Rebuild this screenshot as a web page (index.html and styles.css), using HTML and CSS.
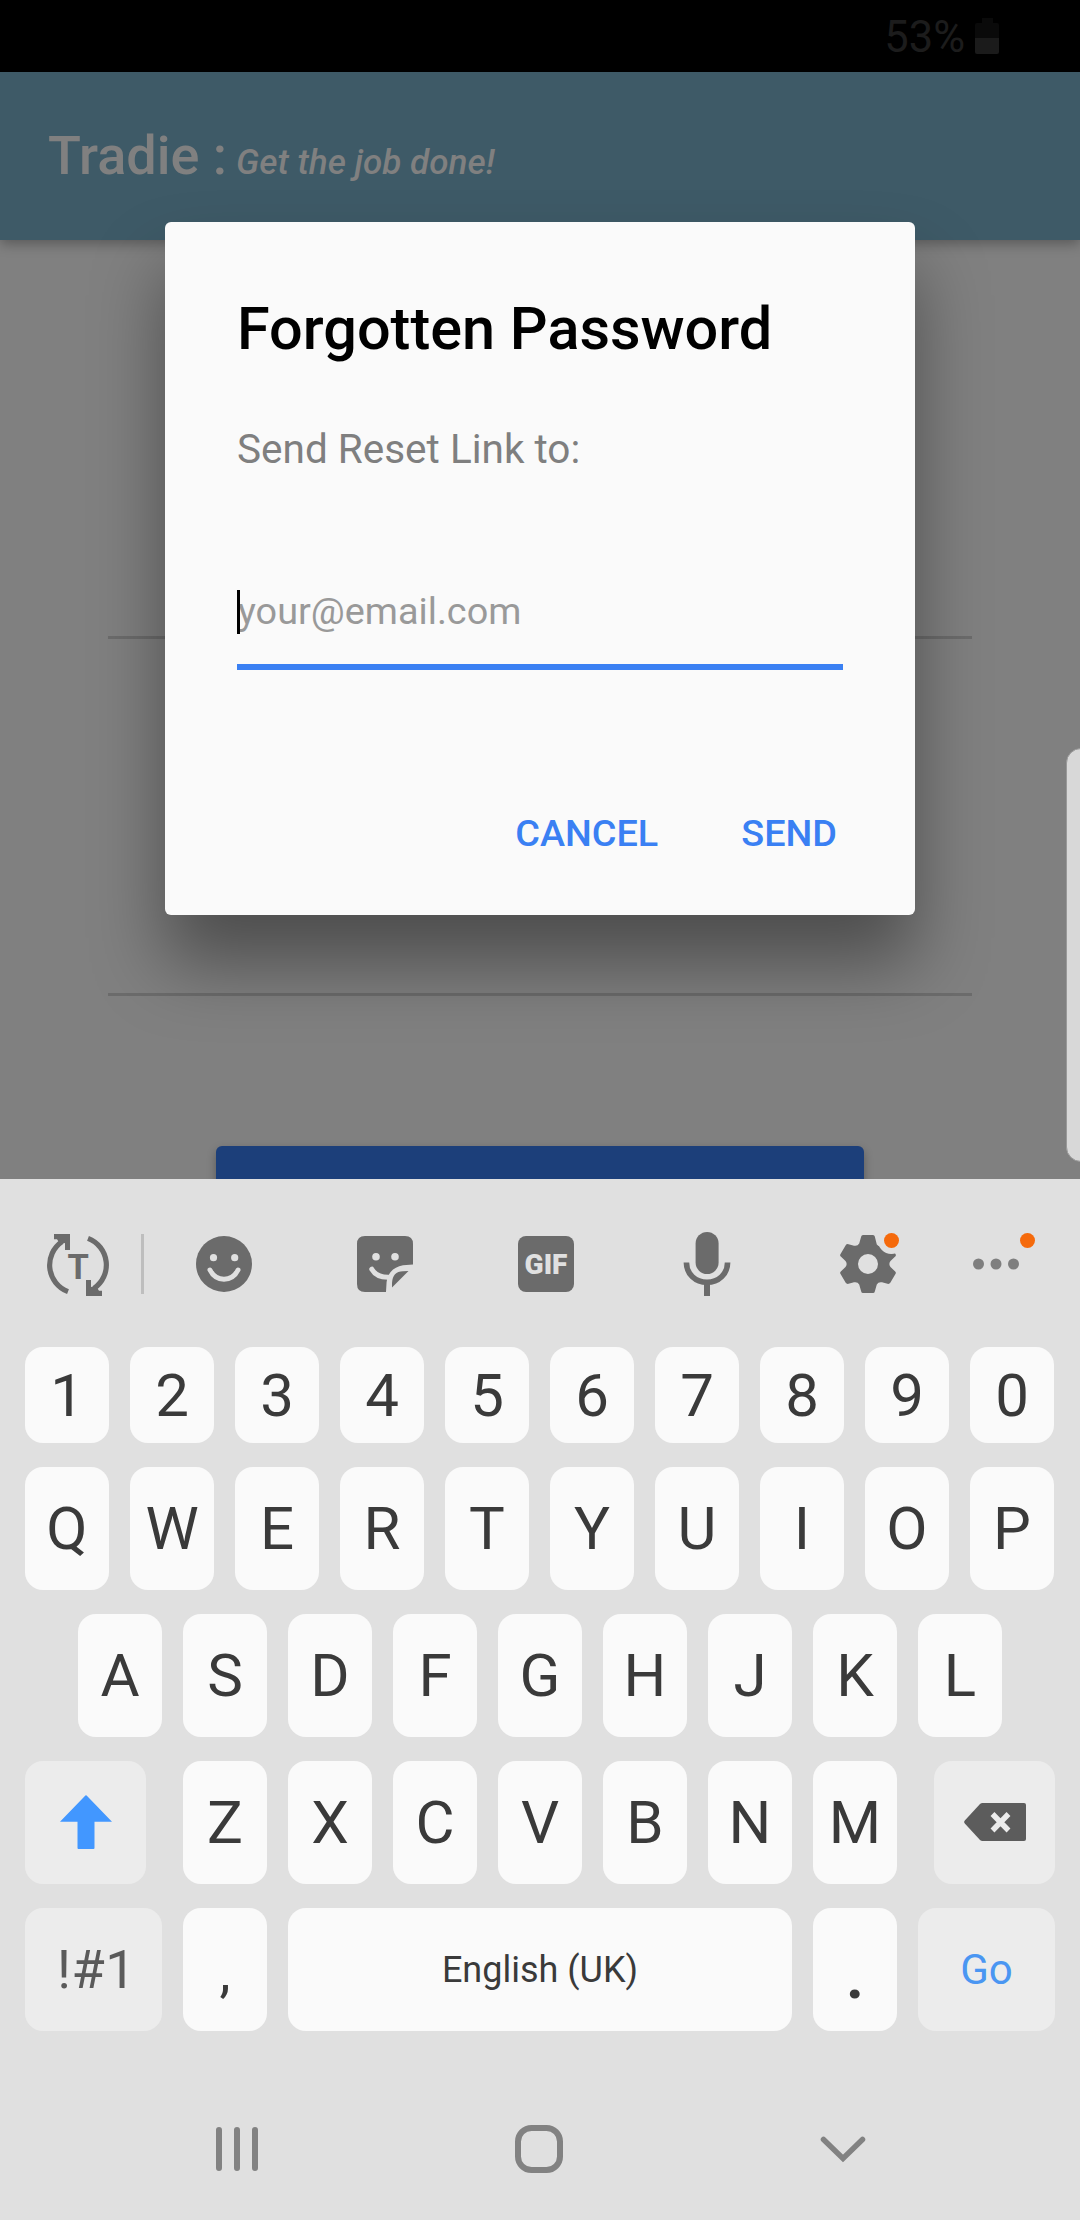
FILE: index.html
```html
<!DOCTYPE html>
<html lang="en">
<head>
<meta charset="utf-8">
<title>Tradie</title>
<link rel="stylesheet" href="styles.css">
</head>
<body>
<div class="screen">
  <div class="status-bar">
    <span class="battery-level">53%</span>
    <svg class="battery" width="24" height="36" viewBox="0 0 24 36"><path d="M7 0H18V5H7Z" fill="#0a0a0a"/><path d="M2 5H22Q24 5 24 7V20H0V7Q0 5 2 5Z" fill="#0a0a0a"/><path d="M0 20H24V34Q24 36 22 36H2Q0 36 0 34Z" fill="#1b1b1b"/></svg>
  </div>
  <header class="app-bar">
    <span class="brand">Tradie :</span><span class="tagline">Get the job done!</span>
  </header>
  <main class="content">
    <div class="field-line first"></div>
    <div class="field-line second"></div>
    <div class="login-button"></div>
  </main>

  <section class="keyboard">
    <div class="toolbar">
      <div class="tool">
        <svg width="62" height="62" viewBox="0 0 62 62"><g fill="none" stroke="#6b6b6b" stroke-width="5.2"><path d="M21 57.6A28.4 28.4 0 0 1 15 7.600"/><path d="M41 4.4A28.4 28.4 0 0 1 47 54.400"/></g><path d="M7 0H23V16H18V9L13 10L10 5.200H7ZM55 62H39V46H44V53L49 52L52 56.800H55Z" fill="#6b6b6b"/><text class="icon-t" x="31.200" y="45" text-anchor="middle">T</text></svg>
      </div>
      <div class="divider"></div>
      <div class="tool">
        <svg width="56" height="56" viewBox="0 0 56 56"><circle cx="28" cy="28" r="28" fill="#6b6b6b"/><circle cx="17.500" cy="21.700" r="3.600" fill="#e0e0e0"/><circle cx="38.700" cy="21.700" r="3.600" fill="#e0e0e0"/><path d="M14 34Q18.500 43.200 28 43.200T42 34" fill="none" stroke="#e0e0e0" stroke-width="5" stroke-linecap="round"/></svg>
      </div>
      <div class="tool">
        <svg width="56" height="56" viewBox="0 0 56 56"><path d="M8 0H48Q56 0 56 8V28.500L46 29.200Q36 31 31.600 39Q30 42 29.600 46L29 56H8Q0 56 0 48V8Q0 0 8 0Z" fill="#6b6b6b"/><circle cx="19" cy="20.700" r="3.800" fill="#e0e0e0"/><circle cx="38" cy="20.700" r="3.800" fill="#e0e0e0"/><path d="M14.800 33.200Q19.500 41.300 31 41.300" fill="none" stroke="#e0e0e0" stroke-width="5" stroke-linecap="round"/><path d="M51.500 35L35 51.500V47Q35.500 35.500 46 35.200Z" fill="#6b6b6b"/></svg>
      </div>
      <div class="tool"><span class="gif">GIF</span></div>
      <div class="tool">
        <svg width="48" height="64" viewBox="0 0 48 64"><rect x="12.600" y="0" width="23" height="42" rx="11.500" fill="#6b6b6b"/><path d="M3.400 30.500C3.400 42 12.500 50.300 24 50.300S44.600 42 44.600 30.500" fill="none" stroke="#6b6b6b" stroke-width="5.600"/><path d="M21 50H27V64H21Z" fill="#6b6b6b"/></svg>
      </div>
      <div class="tool">
        <svg width="60" height="60" viewBox="-30 -30 60 60"><path fill="#6b6b6b" fill-rule="evenodd" d="M-5 -29H5Q6.500 -29 6.800 -27.500L8.800 -19.500Q11 -17 14 -17.800L19.500 -19.800Q21.300 -20.300 22.300 -18.800L27.600 -9.800Q28.300 -8.500 27.200 -7.500L22.500 -3Q20.200 0 22.500 3L27.200 7.500Q28.300 8.500 27.600 9.800L22.300 18.800Q21.300 20.300 19.500 19.800L14 18.300Q10.500 17.500 8.800 20.500L6.800 27.500Q6.500 29 5 29H-5Q-6.500 29 -6.800 27.500L-8.800 20.500Q-10.500 17.500 -14 18.300L-19.500 19.800Q-21.300 20.300 -22.300 18.800L-27.600 9.800Q-28.300 8.500 -27.200 7.500L-22.500 3Q-20.200 0 -22.500 -3L-27.200 -7.500Q-28.300 -8.500 -27.600 -9.800L-22.300 -18.800Q-21.300 -20.300 -19.500 -19.800L-14 -18.300Q-10.500 -17.500 -8.800 -20.500L-6.800 -27.500Q-6.500 -29 -5 -29ZM0 -10A10 10 0 1 0 0 10A10 10 0 1 0 0 -10Z"/><circle cx="23.300" cy="-23.500" r="13.400" fill="#e0e0e0"/></svg>
        <i class="badge"></i>
      </div>
      <div class="tool">
        <svg width="48" height="12" viewBox="0 0 48 12" fill="#7f7f7f"><circle cx="6.500" cy="6" r="5.500"/><circle cx="24" cy="6" r="5.500"/><circle cx="41.500" cy="6" r="5.500"/></svg>
        <i class="badge far"></i>
      </div>
    </div>
    <div class="rows">
      <div class="row digits"><b>1</b><b>2</b><b>3</b><b>4</b><b>5</b><b>6</b><b>7</b><b>8</b><b>9</b><b>0</b></div>
      <div class="row"><b>Q</b><b>W</b><b>E</b><b>R</b><b>T</b><b>Y</b><b>U</b><b>I</b><b>O</b><b>P</b></div>
      <div class="row home"><b>A</b><b>S</b><b>D</b><b>F</b><b>G</b><b>H</b><b>J</b><b>K</b><b>L</b></div>
      <div class="row letters">
        <b class="fn shift"><svg width="52" height="54" viewBox="0 0 52 54"><path d="M25.400 .6Q26 0 26.600 .6L52 26.700H34.500V53Q34.500 54 33.500 54H18.500Q17.500 54 17.500 53V26.700H0Z" fill="#4297ff"/></svg></b>
        <b>Z</b><b>X</b><b>C</b><b>V</b><b>B</b><b>N</b><b>M</b>
        <b class="fn delete"><svg width="62" height="38" viewBox="0 0 62 38"><path d="M18.500 0H60Q62 0 62 2V36Q62 38 60 38H18.500Q17 38 16 37L.8 20.500Q-.5 19 .8 17.500L16 1Q17 0 18.500 0Z" fill="#5c5c5c"/><path d="M28.500 11L44.500 27.500M44.500 11L28.500 27.500" stroke="#ececec" stroke-width="5.400"/></svg></b>
      </div>
      <div class="row">
        <b class="fn symbols">!#1</b><b class="comma">,</b><b class="space">English (UK)</b><b class="period">.</b><b class="fn go">Go</b>
      </div>
    </div>
    <nav class="nav">
      <svg width="42" height="46" viewBox="0 0 42 46"><path d="M3 4V42M21 4V42M39 4V42" stroke="#828282" stroke-width="6" stroke-linecap="round"/></svg>
      <svg width="48" height="48" viewBox="0 0 48 48"><rect x="3" y="3" width="42" height="42" rx="13.500" fill="none" stroke="#828282" stroke-width="6"/></svg>
      <svg width="46" height="28" viewBox="0 0 46 28"><path d="M3.500 4.500L23 23.500L42.500 4.500" fill="none" stroke="#828282" stroke-width="5.500" stroke-linecap="round"/></svg>
    </nav>
  </section>

  <section class="dialog">
    <h1>Forgotten Password</h1>
    <p>Send Reset Link to:</p>
    <div class="email"><i class="caret"></i><span>your@email.com</span></div>
    <div class="actions"><span class="cancel">CANCEL</span><span class="send">SEND</span></div>
  </section>
  <div class="edge-handle"></div>
</div>
</body>
</html>
```
FILE: styles.css
```css
* { box-sizing: border-box; }
body { margin: 0; font-family: Roboto, sans-serif; }
svg { display: block; overflow: visible; }
.screen { position: relative; width: 1080px; height: 2220px; overflow: hidden; background: #808080; display: flex; flex-direction: column; }

.status-bar { height: 72px; background: #000; display: flex; justify-content: flex-end; padding: 0 81px 0 0; gap: 10px; }
.battery-level { color: #1c1c1c; font-size: 43.5px; line-height: 72px; padding-top: 2px; }
.battery { margin-top: 18px; }
.app-bar { position: relative; height: 168px; background: #3e5a67; color: #808080; display: flex; align-items: baseline; padding: 52px 48px 0; box-shadow: 0 4px 12px rgba(0, 0, 0, .3); }
.brand { font-size: 54px; line-height: 64px; font-weight: 500; }
.tagline { font-size: 35.1px; font-weight: 500; font-style: italic; margin-left: 9px; }

.content { height: 939px; padding: 396px 108px 0; overflow: hidden; }
.field-line { height: 3px; background: #6c6c6c; }
.field-line.second { margin-top: 354px; }
.login-button { margin: 150px 108px 0; height: 60px; border-radius: 6px; background: #1c3f7a; box-shadow: 0 4px 10px rgba(0, 0, 0, .3); }

.keyboard { position: relative; height: 1041px; background: #e0e0e0; }
.toolbar { height: 168px; padding-top: 2px; display: grid; grid-template-columns: 141px 3px 160px 162px 160px 162px 160px 96px; align-items: center; }
.tool { position: relative; height: 64px; display: flex; align-items: center; justify-content: center; }
.tool:first-child { padding: 2px 0 0 15px; }
.divider { height: 60px; background: #bebebe; }
.icon-t { font-size: 34.5px; font-weight: 700; fill: #6b6b6b; }
.gif { width: 56px; height: 56px; border-radius: 8px; background: #6b6b6b; color: #e0e0e0; font-size: 28px; font-weight: 900; line-height: 57px; text-align: center; }
.badge { position: absolute; left: 96px; top: 1px; width: 15px; height: 15px; border-radius: 50%; background: #f56a0c; }
.badge.far { left: 72px; }

.rows { display: flex; flex-direction: column; gap: 24px; padding: 0 25px; height: 684px; }
.row { display: flex; gap: 21px; height: 123px; }
.row.digits { height: 96px; }
.row.home { padding-left: 53px; }
.row b { width: 84px; flex: none; border-radius: 18px; background: #fafafa; color: #3a3a3a; font-weight: 400; font-size: 60px; display: flex; align-items: center; justify-content: center; }
.row .fn { background: #ececec; }
.row .shift { width: 121px; margin-right: 16px; padding-bottom: 1px; }
.row .delete { width: 121px; margin-left: 16px; padding-bottom: 1px; }
.row .symbols { width: 137px; padding-left: 6px; color: #5a5a5a; font-size: 54px; letter-spacing: .5px; }
.row .space { width: 504px; font-size: 36px; }
.row .go { width: 137px; color: #4a96f2; font-size: 42px; }
.row .comma { font-size: 56px; padding-top: 5px; }
.row .period { font-weight: 700; font-size: 62px; padding-top: 14px; }

.nav { height: 189px; padding: 47px 214px 0 216px; display: flex; align-items: center; justify-content: space-between; }

.dialog { position: absolute; left: 165px; top: 222px; width: 750px; height: 693px; padding: 72px; border-radius: 6px; background: #fafafa; box-shadow: 0 48px 72px rgba(0, 0, 0, .4); }
.dialog h1 { margin: 0; font-size: 59.4px; font-weight: 500; line-height: 70px; color: #000; }
.dialog p { margin: 61px 0 0; font-size: 40.5px; line-height: 48px; color: #7f7f7f; }
.email { margin-top: 105px; height: 92px; padding-top: 11px; border-bottom: 6px solid #3a80f3; position: relative; color: #999; font-size: 37.8px; line-height: 44px; }
.caret { position: absolute; left: 0; top: 12px; width: 3px; height: 44px; background: #000; }
.email span { padding-left: 1px; }
.actions { margin-top: 141px; display: flex; justify-content: flex-end; gap: 83px; padding-right: 6px; color: #3a80f3; font-size: 37.8px; line-height: 44px; font-weight: 500; }

.edge-handle { position: absolute; left: 1066px; top: 748px; width: 30px; height: 414px; border-radius: 18px; background: #d8d8d8; border: 1px solid #999; }
```
